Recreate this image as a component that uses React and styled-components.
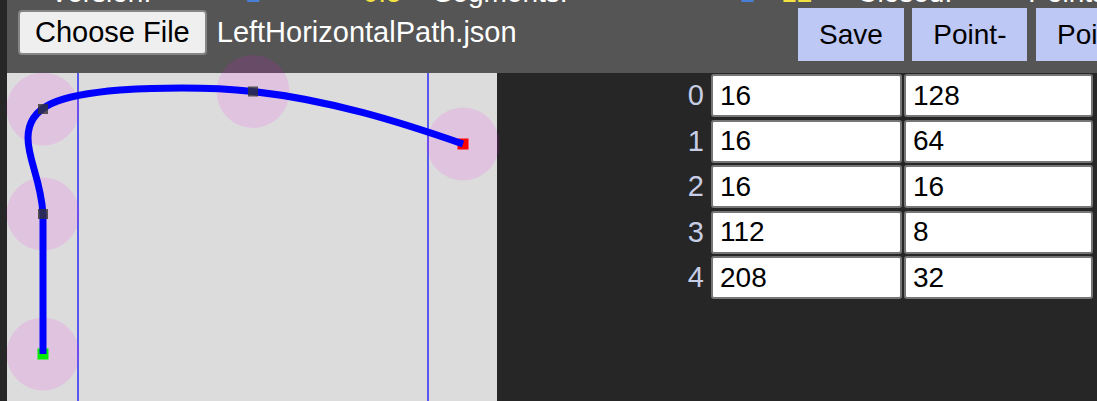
import React from "react";
import styled, { createGlobalStyle } from "styled-components";

const GlobalStyle = createGlobalStyle`
  html, body {
    margin: 0;
    padding: 0;
    background: #262626;
    overflow: hidden;
    font-family: "Liberation Sans", Arial, sans-serif;
  }
`;

const Page = styled.div`
  padding-left: 7px;
  width: 1097px;
  box-sizing: border-box;
`;

const Header = styled.header`
  background: #555555;
  height: 73px;
  box-sizing: border-box;
  padding-bottom: 12px;
  display: flex;
  flex-direction: column;
`;

const StatusLine = styled.div`
  height: 8px;
  overflow: hidden;
  flex-shrink: 0;
`;

const StatusRow = styled.div`
  display: flex;
  white-space: nowrap;
  margin-top: -23px;
  font-size: 28px;
  line-height: 32px;
`;

const StatusItem = styled.span`
  margin-left: ${(p) => p.$gap}px;
  color: ${(p) => p.$color || "#ffffff"};
`;

const Toolbar = styled.div`
  display: flex;
  align-items: flex-start;
  padding-left: 11px;
  height: 53px;
  white-space: nowrap;
`;

const FileGroup = styled.div`
  width: 780px;
  flex-shrink: 0;
  display: flex;
  align-items: flex-start;
`;

const FileButton = styled.button`
  margin-top: 1.5px;
  height: 45px;
  padding: 0 15px;
  font-family: inherit;
  font-size: 29px;
  color: #000;
  background: #efefef;
  border: 2px solid #858585;
  border-radius: 4px;
`;

const FileName = styled.span`
  margin-top: 1.5px;
  margin-left: 10px;
  line-height: 45px;
  font-size: 29px;
  color: #ffffff;
`;

const ButtonGroup = styled.div`
  display: flex;
  gap: 8.5px;
  flex-shrink: 0;
`;

const ActionButton = styled.button`
  height: 53px;
  padding: 0 21px;
  border: none;
  background: #bdc8f4;
  font-family: inherit;
  font-size: 28px;
  color: #000;
`;

const Main = styled.div`
  display: flex;
  align-items: flex-start;
`;

const CanvasBox = styled.div`
  width: 490px;
  height: 490px;
  flex-shrink: 0;
  background: #dcdcdc;
`;

const Drawing = styled.svg`
  display: block;
  overflow: visible;
`;

const RightPanel = styled.div`
  flex: 1;
  display: flex;
  justify-content: flex-end;
  padding: 1px 4px 0 0;
`;

const PointGrid = styled.div`
  display: grid;
  grid-template-columns: auto 191px 189px;
  column-gap: 2px;
  row-gap: 2.5px;
`;

const IndexLabel = styled.div`
  font-size: 29px;
  line-height: 43px;
  color: #c8cde6;
  text-align: right;
  padding-right: 5px;
`;

const CoordInput = styled.input`
  box-sizing: border-box;
  width: 100%;
  height: 43px;
  margin: 0;
  padding: 0 7px;
  border: 2px solid #767676;
  border-radius: 3px;
  background: #ffffff;
  font-family: inherit;
  font-size: 28px;
  color: #000;
  outline: none;
`;

const points = [
  [16, 128],
  [16, 64],
  [16, 16],
  [112, 8],
  [208, 32],
];

const toCanvas = ([x, y]) => [1 + 2.1875 * x, 1 + 2.1875 * y];

function PathCanvas() {
  const pts = points.map(toCanvas);
  const last = pts.length - 1;
  return (
    <CanvasBox>
      <Drawing width="490" height="490" viewBox="0 0 490 490">
        <line x1="71" y1="0" x2="71" y2="490" stroke="rgba(0,0,255,0.6)" strokeWidth="2" />
        <line x1="421" y1="0" x2="421" y2="490" stroke="rgba(0,0,255,0.6)" strokeWidth="2" />
        {pts.map(([x, y], i) => (
          <circle key={i} cx={x} cy={y} r="36.5" fill="rgba(255,0,255,0.11)" />
        ))}
        <rect x={pts[0][0] - 5.5} y={pts[0][1] - 5.5} width="11" height="11" fill="#00ee00" />
        <rect x={pts[last][0] - 5.5} y={pts[last][1] - 5.5} width="11" height="11" fill="#ff0000" />
        <path
          d="M36 281 L36 141 C34 107 21 87 21 65 C21 32 53 22 113 17 C163 14 213 15 246 18.5 C323 27 393 49 456 71"
          fill="none"
          stroke="#0000ff"
          strokeWidth="7"
          strokeLinejoin="round"
        />
        {pts.slice(1, last).map(([x, y], i) => (
          <rect key={i} x={x - 5} y={y - 5} width="10" height="10" fill="#333" opacity="0.8" />
        ))}
      </Drawing>
    </CanvasBox>
  );
}

export default function App() {
  return (
    <>
      <GlobalStyle />
      <Page>
        <Header>
          <StatusLine>
            <StatusRow>
              <StatusItem $gap={43}>Version:</StatusItem>
              <StatusItem $gap={94} $color="#4a7fd6">1</StatusItem>
              <StatusItem $gap={102} $color="#f0e040">0.5</StatusItem>
              <StatusItem $gap={32}>Segments:</StatusItem>
              <StatusItem $gap={172} $color="#4a7fd6">1</StatusItem>
              <StatusItem $gap={26} $color="#f0e040">12</StatusItem>
              <StatusItem $gap={45}>Closed:</StatusItem>
              <StatusItem $gap={76}>Points:</StatusItem>
            </StatusRow>
          </StatusLine>
          <Toolbar>
            <FileGroup>
              <FileButton>Choose File</FileButton>
              <FileName>LeftHorizontalPath.json</FileName>
            </FileGroup>
            <ButtonGroup>
              <ActionButton>Save</ActionButton>
              <ActionButton>Point-</ActionButton>
              <ActionButton>Point+</ActionButton>
            </ButtonGroup>
          </Toolbar>
        </Header>
        <Main>
          <PathCanvas />
          <RightPanel>
            <PointGrid>
              {points.map(([x, y], i) => (
                <React.Fragment key={i}>
                  <IndexLabel>{i}</IndexLabel>
                  <CoordInput defaultValue={x} readOnly />
                  <CoordInput defaultValue={y} readOnly />
                </React.Fragment>
              ))}
            </PointGrid>
          </RightPanel>
        </Main>
      </Page>
    </>
  );
}
